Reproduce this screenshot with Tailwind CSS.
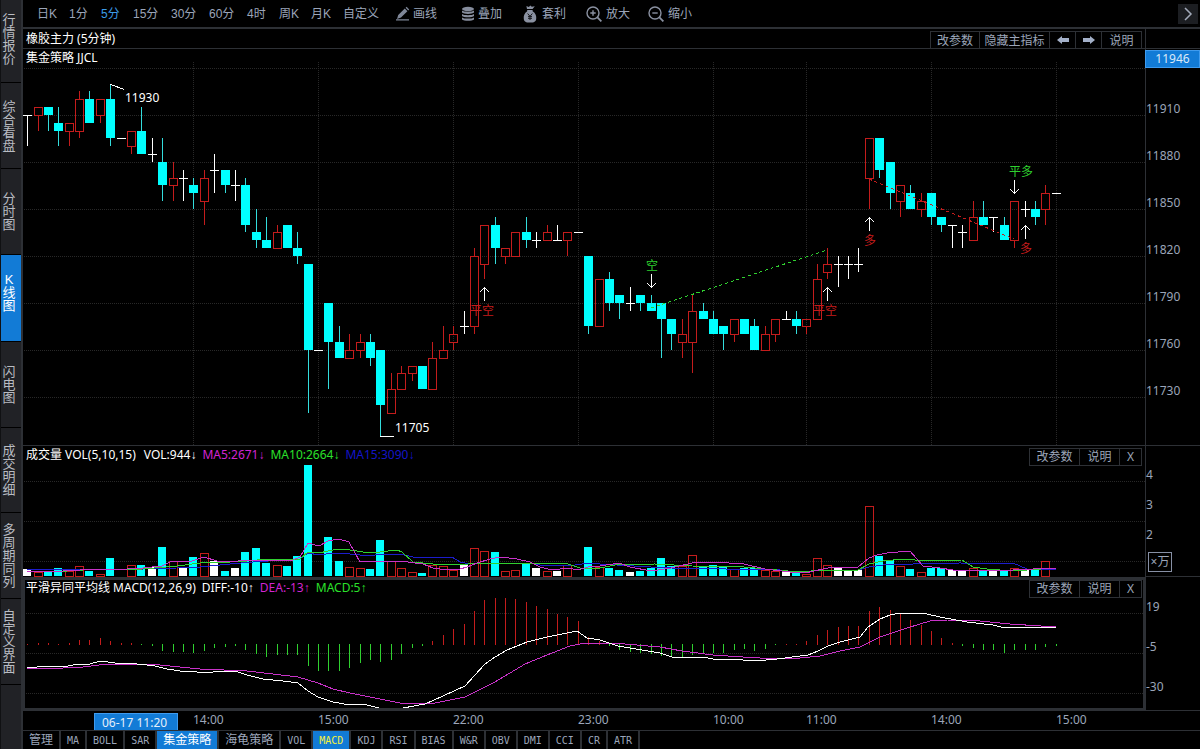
<!DOCTYPE html>
<html lang="zh-CN">
<head>
<meta charset="utf-8">
<meta name="viewport" content="width=device-width, initial-scale=1">
<title>橡胶主力 K线图</title>
<script src="https://cdn.jsdelivr.net/npm/@tailwindcss/browser@4"></script>
</head>
<body class="flex h-screen overflow-hidden bg-black text-[12px] leading-4 text-[#9ba5b9] font-['Liberation_Sans','Noto_Sans_CJK_SC',sans-serif]">

<nav aria-label="视图" class="flex w-[23px] shrink-0 flex-col border-r-2 border-l border-[#2d3035] border-l-[#101113] bg-[#212226] text-[13px] leading-[13px] text-[#b9bcc2]">
  <button class="flex h-[82px] shrink-0 items-center pb-1 pl-px"><span class="w-[14px]">行情报价</span></button>
  <button class="flex h-[86px] shrink-0 items-center border-t border-black pl-px"><span class="w-[14px]">综合看盘</span></button>
  <button class="flex h-[86px] shrink-0 items-center border-t border-black pl-px"><span class="w-[14px]">分时图</span></button>
  <button class="flex h-[87px] shrink-0 items-center border-t border-black bg-[#127bd6] pb-3 pl-px text-white"><span class="w-[14px]">K<br>线图</span></button>
  <button class="flex h-[86px] shrink-0 items-center border-t border-black pl-px"><span class="w-[14px]">闪电图</span></button>
  <button class="flex h-[85px] shrink-0 items-center border-t border-black pl-px"><span class="w-[14px]">成交明细</span></button>
  <button class="flex h-[86px] shrink-0 items-center border-t border-black pl-px"><span class="w-[14px]">多周期同列</span></button>
  <button class="flex h-[86px] shrink-0 items-center border-t border-black pl-px"><span class="w-[14px]">自定义界面</span></button>
  <div class="border-t border-black"></div>
</nav>

<main class="flex min-w-0 flex-1 flex-col">
  <!-- period toolbar -->
  <div class="flex h-[29px] shrink-0 items-center border-b-2 border-[#2d3035] pl-[14px] text-left">
    <button class="w-8 text-left">日K</button>
    <button class="w-8 text-left">1分</button>
    <button class="w-8 text-left text-[#3b9be8]">5分</button>
    <button class="w-[38px] text-left">15分</button>
    <button class="w-[38px] text-left">30分</button>
    <button class="w-[38px] text-left">60分</button>
    <button class="w-8 text-left">4时</button>
    <button class="w-8 text-left">周K</button>
    <button class="w-8 text-left">月K</button>
    <button class="w-[52px] text-left">自定义</button>
    <button class="flex w-[65px] items-center gap-0.5">
      <svg class="size-4" viewBox="0 0 16 16" fill="#7f8798"><path d="M2 13l1.2-4L9.8 2.6l2.6 2.6L6 11.6zM10.6 1.8l1-1 2.6 2.6-1 1zM1 13.2h13v1.2H1z"/></svg>画线</button>
    <button class="flex w-[62px] items-center gap-0.5">
      <svg class="size-4" viewBox="0 0 16 16" fill="#868d9d"><ellipse cx="8" cy="3" rx="6" ry="2.2"/><path d="M2 4.6c1.6 1.6 10.4 1.6 12 0v2c-1.6 1.7-10.4 1.7-12 0zM2 8c1.6 1.6 10.4 1.6 12 0v2c-1.6 1.7-10.4 1.7-12 0zM2 11.4c1.6 1.6 10.4 1.6 12 0v2c-1.6 1.9-10.4 1.9-12 0z"/></svg>叠加</button>
    <button class="flex w-16 items-center gap-1">
      <svg class="h-[18px] w-4" viewBox="0 0 16 18"><path d="M5 4L4.4 1l2.4 1L8.4.4l1.4 1.4 3-.6L10.6 4zM5.2 5h5.4v1.2C13.6 8 14.6 11 14.2 14c-.4 2.600-2 3.600-6.200 3.600S2.200 16.600 1.800 14c-.4-3 .6-6 3.400-7.800z" fill="#8a91a1"/><path d="M5.600 8.500L8 11.300l2.400-2.800M8 11.300V15M6 11.600h4M6 13.300h4" stroke="#15171c" fill="none"/></svg>套利</button>
    <button class="flex w-[62px] items-center gap-1">
      <svg class="size-4" viewBox="0 0 16 16" fill="none" stroke="#8a91a1" stroke-width="1.400"><circle cx="7" cy="7" r="6"/><path d="M4.300 7h5.400M7 4.300v5.400"/><path d="M11.400 11.400l4 4" stroke-width="1.800"/></svg>放大</button>
    <button class="flex items-center gap-1">
      <svg class="size-4" viewBox="0 0 16 16" fill="none" stroke="#8a91a1" stroke-width="1.400"><circle cx="7" cy="7" r="6"/><path d="M4.300 7h5.400"/><path d="M11.400 11.400l4 4" stroke-width="1.800"/></svg>缩小</button>
    <button aria-label="展开" class="mr-0.5 ml-auto grid size-5 place-items-center bg-[#1c1e22]">
      <svg class="h-[14px] w-[10px]" viewBox="0 0 10 14" fill="none" stroke="#a3abba" stroke-width="1.500"><path d="M2 1l6 6-6 6"/></svg></button>
  </div>

  <!-- instrument title -->
  <div class="flex h-5 shrink-0 border-b border-[#2d3035]">
    <div class="flex min-w-0 flex-1 items-center justify-between pr-[3px] pl-[3px]">
      <h1 class="font-['Noto_Sans','Noto_Sans_CJK_SC',sans-serif] text-white">橡胶主力 (5分钟)</h1>
      <div class="mt-0.5 flex h-[18px] border-t border-l border-[#2d3035] leading-[18px]">
        <button class="w-[49px] border-r border-[#2d3035]">改参数</button>
        <button class="w-[70px] border-r border-[#2d3035]">隐藏主指标</button>
        <button aria-label="上一个" class="grid w-[26px] place-items-center border-r border-[#2d3035]"><svg class="h-2 w-3" viewBox="0 0 12 8" fill="#a3b0c8"><path d="M0 4l5-4v2h7v4H5v2z"/></svg></button>
        <button aria-label="下一个" class="grid w-[26px] place-items-center border-r border-[#2d3035]"><svg class="h-2 w-3" viewBox="0 0 12 8" fill="#a3b0c8"><path d="M12 4L7 0v2H0v4h7v2z"/></svg></button>
        <button class="w-10 border-r border-[#2d3035]">说明</button>
      </div>
    </div>
    <div class="w-[55px] shrink-0 border-l border-[#2d3035]"></div>
  </div>

  <!-- candles -->
  <section class="flex min-h-0 flex-1 border-b border-[#2d3035] font-['Noto_Sans','Noto_Sans_CJK_SC',sans-serif]">
    <div class="relative min-w-0 flex-1 overflow-hidden">
      <svg id="kline" class="absolute inset-0 size-full" role="img" aria-label="5分钟K线"></svg>
      <h2 class="relative w-max pt-px pl-[3px] text-white">集金策略 JJCL</h2>
    </div>
    <div class="w-[55px] shrink-0 border-l border-[#2d3035] pt-px">
      <div class="mb-[17px] -ml-px h-[18px] border border-[#3f9bee] bg-[#127bd6] text-center text-[#dbe9f8]">11946</div>
      <div class="leading-[47px]">11910</div><div class="leading-[47px]">11880</div><div class="leading-[47px]">11850</div><div class="leading-[47px]">11820</div><div class="leading-[47px]">11790</div><div class="leading-[47px]">11760</div><div class="leading-[47px]">11730</div>
    </div>
  </section>

  <!-- volume -->
  <section class="flex h-[131px] shrink-0 font-['Noto_Sans','Noto_Sans_CJK_SC',sans-serif]">
    <div class="relative min-w-0 flex-1 overflow-hidden">
      <svg id="volume" class="absolute inset-0 size-full" role="img" aria-label="成交量"></svg>
      <div class="relative flex items-start justify-between pr-[3px] pl-[3px]">
        <p class="flex gap-1.5 pt-px text-white"><span class="mr-0.5">成交量 VOL(5,10,15)</span><span>VOL:944<span class="font-['Liberation_Sans']">↓</span></span><span class="text-[#d224d2]">MA5:2671<span class="font-['Liberation_Sans']">↓</span></span><span class="text-[#2be02b]">MA10:2664<span class="font-['Liberation_Sans']">↓</span></span><span class="text-[#1414c8]">MA15:3090<span class="font-['Liberation_Sans']">↓</span></span></p>
        <div class="mt-0.5 flex h-[18px] border border-r-0 border-[#2d3035]">
          <button class="w-[50px] border-r border-[#2d3035]">改参数</button><button class="w-10 border-r border-[#2d3035]">说明</button><button class="w-[22px] border-r border-[#2d3035]">X</button>
        </div>
      </div>
    </div>
    <div class="w-[55px] shrink-0 border-b border-l border-[#2d3035] pt-[14px]">
      <div class="leading-[30px]">4</div><div class="leading-[30px]">3</div><div class="leading-[30px]">2</div>
      <div class="mt-0.5 ml-0.5 h-5 w-6 border border-[#8790a5] text-center leading-[18px]">×万</div>
    </div>
  </section>

  <!-- MACD -->
  <section class="flex h-[134px] shrink-0 font-['Noto_Sans','Noto_Sans_CJK_SC',sans-serif]">
    <div class="relative min-w-0 flex-1 overflow-hidden border-x-2 border-y-[3px] border-[#2d3035]">
      <svg id="macd" class="absolute inset-0 size-full" role="img" aria-label="MACD"></svg>
      <div class="relative flex items-start justify-between pr-px pl-px">
        <p class="flex gap-1.5 text-white"><span>平滑异同平均线 MACD(12,26,9)</span><span>DIFF:-10<span class="font-['Liberation_Sans']">↑</span></span><span class="text-[#d224d2]">DEA:-13<span class="font-['Liberation_Sans']">↑</span></span><span class="text-[#2be02b]">MACD:5<span class="font-['Liberation_Sans']">↑</span></span></p>
        <div class="flex h-[18px] border border-r-0 border-[#2d3035]">
          <button class="w-[50px] border-r border-[#2d3035]">改参数</button><button class="w-10 border-r border-[#2d3035]">说明</button><button class="w-[22px] border-r border-[#2d3035]">X</button>
        </div>
      </div>
    </div>
    <div class="w-[55px] shrink-0 border-b border-l border-[#2d3035] pt-[10px]">
      <div class="leading-10">19</div><div class="leading-10">-5</div><div class="leading-10">-30</div>
    </div>
  </section>

  <svg id="times" class="h-[19px] w-full shrink-0 font-['Noto_Sans',sans-serif]" role="img" aria-label="时间轴"></svg>

  <!-- indicator tabs -->
  <nav aria-label="指标" class="flex h-[19px] shrink-0 border-t border-[#2d3035] font-['DejaVu_Sans_Mono','Noto_Sans_CJK_SC',monospace] text-[10px] leading-[19px]">
    <button class="border-r-2 border-[#2d3035] px-1.5 text-[12px]">管理</button>
    <button class="border-r-2 border-[#2d3035] px-1.5">MA</button>
    <button class="border-r-2 border-[#2d3035] px-1.5">BOLL</button>
    <button class="border-r-2 border-[#2d3035] px-1.5">SAR</button>
    <button class="border-r-2 border-[#2d3035] bg-[#127bd6] px-1.5 text-[12px] text-white">集金策略</button>
    <button class="border-r-2 border-[#2d3035] px-1.5 text-[12px]">海龟策略</button>
    <button class="border-r-2 border-[#2d3035] px-1.5">VOL</button>
    <button class="border-r-2 border-[#2d3035] bg-[#127bd6] px-1.5 text-[#f4f03c]">MACD</button>
    <button class="border-r-2 border-[#2d3035] px-1.5">KDJ</button>
    <button class="border-r-2 border-[#2d3035] px-1.5">RSI</button>
    <button class="border-r-2 border-[#2d3035] px-1.5">BIAS</button>
    <button class="border-r-2 border-[#2d3035] px-1.5">W&amp;R</button>
    <button class="border-r-2 border-[#2d3035] px-1.5">OBV</button>
    <button class="border-r-2 border-[#2d3035] px-1.5">DMI</button>
    <button class="border-r-2 border-[#2d3035] px-1.5">CCI</button>
    <button class="border-r-2 border-[#2d3035] px-1.5">CR</button>
    <button class="border-r-2 border-[#2d3035] px-1.5">ATR</button>
  </nav>
</main>

<script>
// One entry per bar: colour, then high, body top, body bottom, low in ticks of 5 below 11910.
const bars = `w 0 0 0 4|r -1 -1 0 2|c -1 -1 0 2|c -1 1 2 4|r 1 1 2 4|r -3 -2 2 3|c -3 -2 1 1|r -2 -2 0 1|c -4 -2 3 4|w 3 3 3 3
r 2 2 4 5|c -1 2 5 5|w 3 5 5 6|c 3 6 9 11|r 6 8 9 11|w 7 8 8 11|c 8 9 10 12|r 7 8 11 14|w 5 7 7 10|c 7 7 9 10
w 7 9 9 11|c 8 9 14 15|c 12 15 16 17|c 13 16 17 17|r 14 15 17 17|c 14 14 17 17|c 15 17 18 19|c 19 19 30 38|w 30 30 30 30|c 24 24 29 35
c 27 29 31 31|r 28 30 31 31|r 28 29 30 31|c 28 29 31 32|c 30 30 37 41|r 33 35 38 38|r 32 33 35 35|r 32 32 33 34|c 32 32 35 35|r 29 31 35 35
r 27 30 31 31|r 27 28 29 30|w 25 27 27 28|r 17 18 27 28|r 14 14 19 21|c 13 14 17 19|r 17 17 18 19|r 15 15 18 18|c 13 15 16 17|w 15 16 16 17
r 14 15 16 16|w 14 16 16 16|r 15 15 16 18|w 15 15 15 15|c 18 18 27 28|r 21 21 27 27|c 20 21 24 25|c 23 23 24 26|w 22 24 24 25|c 23 23 24 25
c 23 24 25 25|c 24 24 26 31|c 26 26 28 30|r 26 28 29 31|r 23 25 29 33|c 24 25 26 26|c 25 26 28 28|c 27 27 28 30|r 26 26 28 29|c 26 26 28 28
c 26 27 30 30|r 27 28 30 30|r 26 26 28 29|w 25 26 26 26|c 25 26 27 28|r 26 26 27 28|r 19 21 26 26|r 17 19 20 21|w 18 19 19 22|w 18 19 19 21
w 17 19 19 20|r 3 3 8 12|c 3 3 7 8|c 6 6 10 12|r 9 9 11 13|c 9 10 12 12|r 10 11 12 13|c 10 10 13 14|c 13 13 14 15|w 14 14 14 17
w 14 15 15 17|r 11 13 16 16|c 11 13 14 14|w 13 13 13 15|c 13 14 16 16|r 11 11 16 17|w 11 12 12 13|c 11 12 13 14|r 9 10 12 14|w 10 10 10 10`
  .split(/[|\n]/).map(s => { const [t, ...v] = s.trim().split(' '); return [t, ...v.map(Number)]; });

// Bar heights of the volume panel.
const vol = [7,4,5,8,5,10,5,2,18,0, 11,11,9,29,15,8,19,23,15,5, 8,24,28,13,11,10,20,111,0,39,
  15,9,8,7,36,15,8,4,3,11, 10,6,12,28,25,24,5,6,13,8, 5,5,11,0,29,9,8,6,4,5,
  8,18,10,10,21,9,11,10,7,8, 8,6,5,4,4,2,18,11,8,5, 6,70,20,16,10,7,4,8,8,6,
  5,8,6,5,6,8,6,6,15,0];

// Histogram ends around the zero line, positive upwards.
const hist = [1,2,2,1,2,5,5,7,4,2, 2,-1,-2,-7,-8,-8,-9,-7,-4,-3, -2,-6,-10,-13,-11,-11,-11,-22,-27,-27,
  -27,-24,-19,-16,-18,-16,-10,-4,-2,4, 10,16,21,34,45,47,47,46,43,39, 36,31,28,24,8,4,-2,-6,-8,-9,
  -10,-12,-13,-14,-11,-9,-9,-9,-6,-5, -7,-5,-1,1,1,4,10,15,18,19, 19,34,38,35,31,25,20,14,7,2,
  -2,-4,-6,-6,-9,-6,-6,-6,-3,-2];

const RED = '#c41c1c', CYAN = '#00ffff', GREEN = '#2fd02f', PURPLE = '#c832c8', GRID = '#282828';
const color = { r: RED, c: CYAN, w: '#ffffff' };
const X = i => Math.floor(27.65 + 10.39 * i);
const Y = u => Math.ceil(114.5 + 47 / 6 * u);
const rect = (x, y, w, h, f) => `<rect x="${x}" y="${y}" width="${w}" height="${h}" fill="${f}"/>`;
const box = (x, y, w, h) => `<rect x="${x + .5}" y="${y + .5}" width="${w - 1}" height="${h - 1}" fill="none" stroke="${RED}"/>`;
const line = (p, c, dash = '') => `<polyline points="${p}" fill="none" stroke="${c}" stroke-dasharray="${dash}"/>`;
const text = (x, y, s, c) => `<text x="${x}" y="${y}" fill="${c}">${s}</text>`;
const ticks = [193, 318, 453, 578, 713, 806, 931, 1056];
const rows = ys => ys.map(y => line(`24,${y}.5 1145,${y}.5`, GRID, '1 1')).join('');
const draw = (id, x, y, s) => document.getElementById(id).innerHTML = `<g shape-rendering="crispEdges" font-size="12" transform="translate(${-x} ${-y})">${s}</g>`;

let k = rows([68, 115, 162, 209, 256, 303, 350, 397]) + ticks.map(x => line(`${x}.5,62 ${x}.5,445`, GRID, '1 1')).join('');
bars.forEach(([t, hi, a, b, lo], i) => {
  const x = X(i);
  if (t === 'r') {
    k += rect(x, Y(hi), 1, Y(a) - Y(hi), RED) + rect(x, Y(b), 1, Y(lo) - Y(b), RED) + box(x - 4, Y(a), 9, Y(b) - Y(a) + 1);
  } else {
    k += rect(x, Y(hi), 1, Y(lo) - Y(hi), t === 'c' ? '#33dddd' : '#fff') + rect(x - 4, Y(a), 9, Math.max(1, Y(b) - Y(a)), color[t]);
  }
});
const up = (x, y) => line(`${x}.5,${y + 14} ${x}.5,${y}`, '#fff') + line(`${x - 4},${y + 5} ${x + .5},${y + .5} ${x + 5},${y + 5}`, '#fff');
const down = (x, y) => line(`${x}.5,${y} ${x}.5,${y + 14}`, '#fff') + line(`${x - 4},${y + 9} ${x + .5},${y + 13.5} ${x + 5},${y + 9}`, '#fff');
k += up(484, 287) + up(827, 287) + up(869, 217) + up(1025, 225) + down(651, 274) + down(1014, 180);
k += line('651,308 827,250', GREEN, '3 3') + line('869,179 1014,239', RED, '3 3');
k += text(646, 270, '空', GREEN) + text(1009, 176, '平多', GREEN) + text(470, 315, '平空', RED) + text(813, 315, '平空', RED) + text(864, 245, '多', RED) + text(1020, 253, '多', RED);
k += line('110,84.5 115,86 124,89.5', '#fff') + line('380,436.5 394,436.5', '#fff') + text(125, 102, '11930', '#fff') + text(395, 432, '11705', '#fff');
draw('kline', 23, 49, k);

let v = rows([481, 521, 561]);
vol.forEach((h, i) => {
  if (!h) return;
  const t = bars[i][0], x = X(i) - 4;
  v += t === 'r' ? box(x, 576 - h, 9, h + 1) : rect(x, 576 - h, 8, h, color[t]);
});
v += line('27,569 110,569 143,569 177,568 200,567 230,564 253,562 300,559 308,553 319,555 333,553 350,554 370,556 380,554 400,554 413,557 452,557 460,562 470,564 507,563 530,563 540,565 567,566 590,563 600,564 651,567 671,568 780,570 858,570 869,567 883,565 913,564 960,563 997,564 1013,563 1027,569 1056,569', '#1c1ccc');
v += line('27,571 67,571 83,570 143,569 177,566 200,563 230,562 247,561 257,560 300,559 308,552 319,553 328,551 339,549 350,550 370,553 380,552 397,550 402,552 413,562 423,563 433,564 463,565 473,563 490,564 500,563 547,563 568,564 583,569 600,568 615,565 655,564 692,566 744,567 765,569 800,572 823,570 858,570 869,564 883,561 903,559 927,561 962,560 973,567 987,569 1013,571 1056,568', GREEN);
v += line('27,571 63,571 80,570 110,569 127,569 143,568 162,566 172,561 192,561 204,557 217,561 230,562 247,560 258,560 293,560 300,557 308,543 319,546 328,541 339,539 349,542 360,562 368,561 400,561 423,564 433,568 440,569 460,569 467,567 477,563 490,559 500,557 517,559 530,562 540,567 548,569 560,569 568,568 578,570 588,567 600,566 619,563 630,567 651,571 671,568 692,563 713,562 744,564 765,569 790,572 805,573 823,569 833,567 858,567 869,558 877,555 887,553 910,551 923,566 940,568 953,570 1013,570 1033,569 1043,568 1056,568', PURPLE);
draw('volume', 23, 446, v);

let m = rows([613, 653, 693]);
hist.forEach((h, i) => m += h > 0 ? rect(X(i), 645 - h, 1, h, RED) : rect(X(i), 644, 1, -h, GREEN));
m += line('27,668 63,668 83,667 107,664 147,664 160,665 200,669 247,671 298,677 318,683 333,689 350,693 400,703 435,703 465,697 495,682 525,664 547,655 570,646 585,643 613,643 660,647 682,651 713,655 743,657 777,659 800,658 820,656 840,651 860,647 880,637 907,628 930,621 947,620 980,621 1010,624 1056,627', PURPLE);
m += line('27,668 47,666 63,667 78,664 90,664 100,661 115,663 137,664 147,665 155,666 167,669 180,671 197,672 213,672 235,671 247,675 263,679 283,681 298,683 308,691 318,697 333,702 350,705 363,704 379,708 391,711 403,708 425,704 443,696 465,686 475,675 485,664 495,657 507,650 517,646 527,642 547,637 567,633 577,631 587,638 600,640 618,646 660,653 672,657 683,658 702,657 713,659 743,660 755,661 777,659 800,656 808,655 818,651 828,646 840,642 860,637 868,627 880,619 890,615 900,613 927,614 940,617 967,622 993,625 1005,628 1017,627 1037,628 1056,627', '#fff');
draw('macd', 25, 580, m);

const times = ['14:00', '15:00', '22:00', '23:00', '10:00', '11:00', '14:00', '15:00'];
draw('times', 23, 711, times.map((t, i) => text(ticks[i], 724, t, '#9ba5b9')).join('')
  + '<rect x="94.5" y="713.5" width="83" height="17" fill="#127bd6" stroke="#3f9bee"/>' + text(102, 727, '06-17 11:20', '#e4effa'));
</script>
</body>
</html>
